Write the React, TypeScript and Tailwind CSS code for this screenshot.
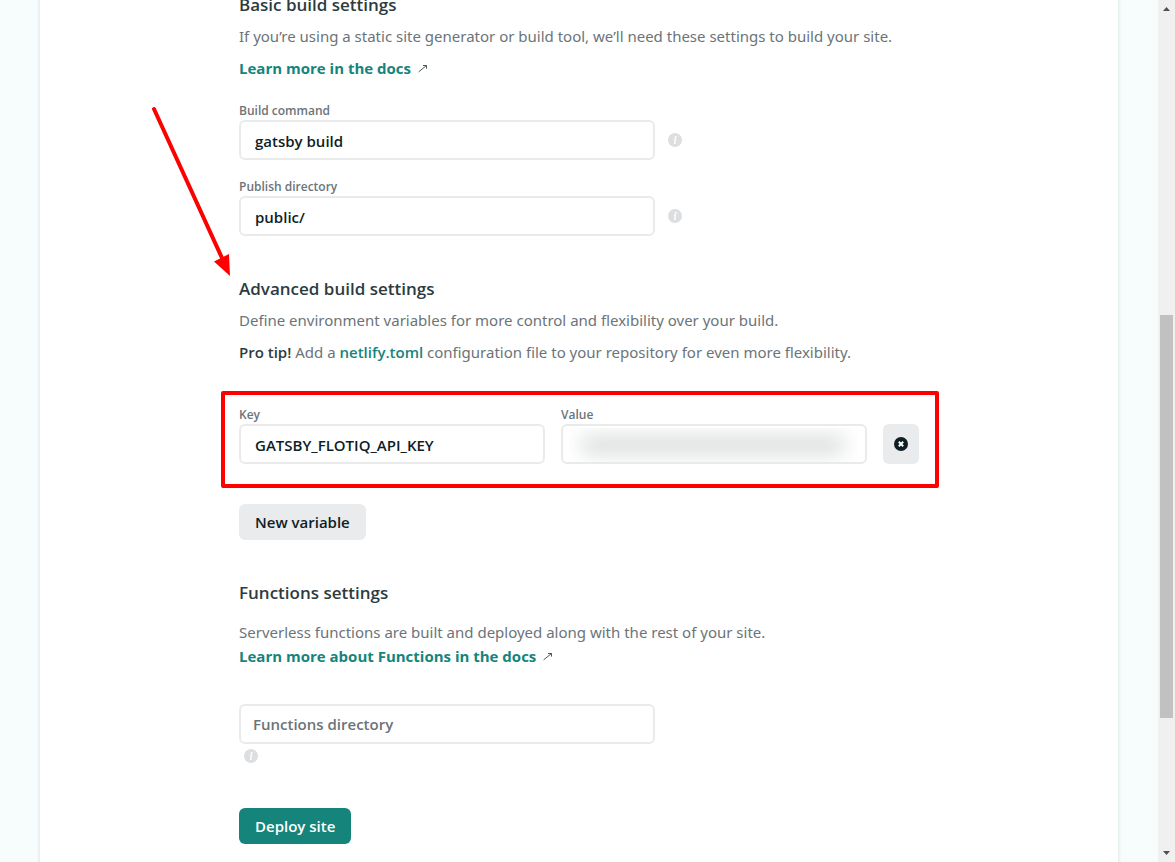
import { useState, type ReactNode } from "react";

const inputClass =
  "h-10 w-full rounded-md border-2 border-[#e9ebeb] bg-white pt-0.5 pr-3.5 pl-3.5 font-['Open_Sans',sans-serif] text-[15px] font-semibold text-[#0e1e25] outline-none placeholder-shown:pt-0 placeholder-shown:pl-3 placeholder:text-[#6b7479] placeholder:opacity-100 focus:border-[#15847d]";

function InfoIcon() {
  return (
    <svg viewBox="0 0 14 14" className="h-3.5 w-3.5 flex-shrink-0" aria-hidden="true">
      <circle cx="7" cy="7" r="7" fill="#dcdee0" />
      <circle cx="7.7" cy="3.9" r="1" fill="#fff" />
      <path d="M5.9 6.2 H7.5 L6.7 10.2 M6 10.3 H7.7" fill="none" stroke="#fff" strokeWidth="1.3" />
    </svg>
  );
}

function ExternalIcon() {
  return (
    <svg viewBox="0 0 10 10" className="h-2.5 w-2.5" fill="none" stroke="#4a5a60" strokeWidth="1" aria-hidden="true">
      <path d="M0.6 8.9 L8.6 2.4" />
      <path d="M5 2.5 H8.5 V5.6" />
    </svg>
  );
}

function RemoveIcon() {
  return (
    <svg viewBox="0 0 14 14" className="h-3.5 w-3.5" aria-hidden="true">
      <circle cx="7" cy="7" r="7" fill="#0e1e25" />
      <path d="M4.8 4.8 L9.2 9.2 M9.2 4.8 L4.8 9.2" stroke="#fff" strokeWidth="2" />
    </svg>
  );
}

function Field({ id, label, children }: { id: string; label: string; children: ReactNode }) {
  return (
    <div className="min-w-0 flex-1">
      <label htmlFor={id} className="block font-['Open_Sans',sans-serif] text-[12px] leading-[18px] font-semibold text-[#6b7479]">
        {label}
      </label>
      {children}
    </div>
  );
}

function SectionTitle({ children }: { children: ReactNode }) {
  return (
    <h2 className="-mb-0.5 font-['Open_Sans',sans-serif] text-[17px] leading-[26px] font-semibold text-[#2d3b41]">{children}</h2>
  );
}

function DocsLink({ children }: { children: ReactNode }) {
  return (
    <p className="flex items-center gap-[7px] leading-6">
      <a href="#docs" className="font-['Open_Sans',sans-serif] font-bold text-[#15847d]">
        {children}
      </a>
      <ExternalIcon />
    </p>
  );
}

function Scrollbar() {
  return (
    <div className="flex w-[17px] flex-shrink-0 flex-col items-center bg-[#f0f0f0]" aria-hidden="true">
      <svg viewBox="0 0 17 17" className="h-[17px] w-[17px]" fill="#505050">
        <path d="M5 11 L8.5 7 L12 11 Z" />
      </svg>
      <div className="grow-[298]" />
      <div className="w-[13px] grow-[403] bg-[#c1c1c1]" />
      <div className="grow-[127]" />
      <svg viewBox="0 0 17 17" className="h-[17px] w-[17px]" fill="#505050">
        <path d="M5 6 L8.5 10 L12 6 Z" />
      </svg>
    </div>
  );
}

export default function App() {
  const [command, setCommand] = useState("gatsby build");
  const [directory, setDirectory] = useState("public/");
  const [envKey, setEnvKey] = useState("GATSBY_FLOTIQ_API_KEY");

  return (
    <div className="flex h-screen overflow-hidden bg-[#f7fdfd] font-['Noto_Sans','Open_Sans',sans-serif] text-[15px] text-[#6b7479]">
      <main className="min-w-0 flex-1 overflow-hidden px-10">
        <form
          className="min-h-full bg-white px-6 pb-10 shadow-[0_0_4px_rgba(14,30,37,0.16)]"
          onSubmit={(e) => e.preventDefault()}
        >
          <div className="mx-auto max-w-[680px]">
            <section className="-mt-2 flex flex-col gap-2">
              <SectionTitle>Basic build settings</SectionTitle>
              <p className="leading-6">
                If you’re using a static site generator or build tool, we’ll need these settings to build your site.
              </p>
              <DocsLink>Learn more in the docs</DocsLink>
            </section>

            <div className="mt-[22px] flex max-w-[443px] flex-col gap-[18px]">
              <div className="flex items-end gap-[13px]">
                <Field id="command" label="Build command">
                  <input id="command" className={inputClass} value={command} onChange={(e) => setCommand(e.target.value)} />
                </Field>
                <div className="flex h-10 items-center">
                  <InfoIcon />
                </div>
              </div>
              <div className="flex items-end gap-[13px]">
                <Field id="directory" label="Publish directory">
                  <input id="directory" className={inputClass} value={directory} onChange={(e) => setDirectory(e.target.value)} />
                </Field>
                <div className="flex h-10 items-center">
                  <InfoIcon />
                </div>
              </div>
            </div>

            <section className="relative mt-10 flex flex-col gap-2">
              {/* Red pointer to the advanced settings */}
              <svg viewBox="0 0 82 172" className="pointer-events-none absolute -top-[171px] -left-[89px] h-[172px] w-[82px]" aria-hidden="true">
                <line x1="4" y1="4" x2="72" y2="153" stroke="#ff0000" strokeWidth="4" strokeLinecap="round" />
                <path d="M64 156.5 L79 149 L80 171 Z" fill="#ff0000" />
              </svg>
              <SectionTitle>Advanced build settings</SectionTitle>
              <p className="leading-6">Define environment variables for more control and flexibility over your build.</p>
              <p className="leading-6">
                <strong className="font-['Open_Sans',sans-serif] font-semibold text-[#2d3b41]">Pro tip!</strong> Add a{" "}
                <a href="#netlify-toml" className="font-['Open_Sans',sans-serif] font-semibold text-[#15847d]">
                  netlify.toml
                </a>{" "}
                configuration file to your repository for even more flexibility.
              </p>
            </section>

            <div className="relative mt-[42px] flex items-end gap-4">
              <div className="pointer-events-none absolute -top-[15px] -right-5 -bottom-6 -left-[18px] rounded-xs border-4 border-[#ff0000]" />
              <Field id="env-key" label="Key">
                <input id="env-key" className={inputClass} value={envKey} onChange={(e) => setEnvKey(e.target.value)} />
              </Field>
              <Field id="env-value" label="Value">
                <div className="relative">
                  <input id="env-value" className={inputClass} />
                  <div className="pointer-events-none absolute top-1 right-2.5 bottom-0.5 left-2 overflow-hidden">
                    <div className="mx-3 mt-2 h-[18px] rounded-md bg-[#d9dbdb] blur-[10px]" />
                  </div>
                </div>
              </Field>
              <button
                type="button"
                aria-label="Remove variable"
                className="flex h-10 w-9 flex-shrink-0 items-center justify-center rounded-md bg-[#e9ebed]"
              >
                <RemoveIcon />
              </button>
            </div>

            <button
              type="button"
              className="mt-10 h-9 rounded-md bg-[#e9ebed] px-4 font-['Open_Sans',sans-serif] font-semibold text-[#0e1e25]"
            >
              New variable
            </button>

            <section className="mt-10">
              <SectionTitle>Functions settings</SectionTitle>
              <p className="mt-4 leading-6">Serverless functions are built and deployed along with the rest of your site.</p>
              <DocsLink>Learn more about Functions in the docs</DocsLink>
              <div className="mt-9 max-w-[416px]">
                <input aria-label="Functions directory" placeholder="Functions directory" className={inputClass} />
                <div className="mt-[5px] ml-[5px]">
                  <InfoIcon />
                </div>
              </div>
            </section>

            <button
              type="submit"
              className="mt-[45px] h-9 rounded-md bg-[#15847b] px-4 font-['Open_Sans',sans-serif] font-semibold text-white"
            >
              Deploy site
            </button>
          </div>
        </form>
      </main>
      <Scrollbar />
    </div>
  );
}
